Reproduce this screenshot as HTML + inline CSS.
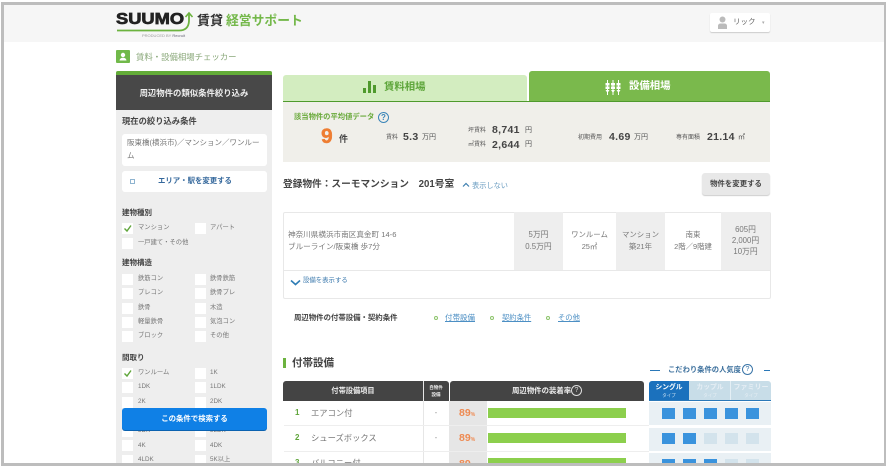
<!DOCTYPE html>
<html lang="ja"><head><meta charset="utf-8"><title>賃料・設備相場チェッカー</title>
<style>
html,body{margin:0;padding:0;background:#fff}
#p{position:relative;width:888px;height:467px;overflow:hidden;background:#fff;font-family:"Liberation Sans","Noto Sans CJK JP",sans-serif;color:#555;filter:blur(.3px)}
#p div,#p span.a{position:absolute;white-space:nowrap}
.t{line-height:12px}
.cb{width:11px;height:11px;background:#fff}
.l{font-size:6.3px;line-height:10px;color:#777}
.h{font-size:7.5px;line-height:12px;font-weight:bold;color:#444}
.c{text-align:center}
.sq{width:13px;height:11px;background:#3a93dd}
.sq.o{background:#d3e3ec}
.row{left:284px;width:365px;height:1px;background:#ececec}
.bar{left:488px;width:138px;height:10px;background:#8ccf4d}
.n{font:bold 10.5px/12px 'Liberation Sans',sans-serif;letter-spacing:.3px;color:#444}
</style></head><body><div id="p">
<div style="left:4px;top:4px;width:880px;height:38px;background:#f6f6f6"></div>

<!-- logo -->
<div style="left:116px;top:11px;font:bold 15.5px/18px 'Liberation Sans',sans-serif;color:#222;-webkit-text-stroke:.7px #222;transform-origin:0 0;transform:scaleX(1.18)">SUUMO</div>
<svg style="position:absolute;left:116px;top:11px" width="80" height="22" viewBox="0 0 80 22"><path d="M1 19.500H63Q72.500 19.500 73 10V3.500" fill="none" stroke="#6cb33f" stroke-width="1.800"/><path d="M69.500 6L73 2L76.500 6" fill="none" stroke="#6cb33f" stroke-width="1.600"/></svg>
<div style="left:142px;top:33px;font-size:4px;line-height:5px;color:#999">PRODUCED BY <span style="color:#667">Recruit</span></div>
<div style="left:197px;top:12px;font-size:13px;line-height:18px;font-weight:bold;color:#333">賃貸</div>
<div style="left:226px;top:12px;font-size:12.800px;line-height:18px;font-weight:bold;color:#74b84a">経営サポート</div>

<!-- user -->
<div style="left:710px;top:13px;width:60px;height:19px;background:#fff;border-radius:2px;box-shadow:0 1px 1px #ccc"></div>
<svg style="position:absolute;left:716px;top:16px" width="12" height="14" viewBox="0 0 12 14"><circle cx="6.500" cy="3.500" r="3" fill="#bbb"/><path d="M2 13V9.500Q2.500 7.500 4.500 7.500H8.500Q10.500 7.500 11 9.500V13Z" fill="#bbb"/></svg>
<div class="t" style="left:733px;top:16px;font-size:7.500px;color:#666">リック</div>
<div class="t" style="left:762px;top:17px;font-size:5px;color:#aaa">▾</div>

<!-- breadcrumb -->
<div style="left:116px;top:50px;width:14px;height:13px;background:#71b94a;border-radius:1px"></div>
<svg style="position:absolute;left:116px;top:50px" width="14" height="13" viewBox="0 0 14 13"><circle cx="7" cy="5" r="2.200" fill="#fff"/><path d="M3.500 10.500Q4 7.800 7 7.800T10.500 10.500Z" fill="#fff"/></svg>
<div class="t" style="left:136px;top:51px;font-size:8.400px;color:#8aa87a">賃料・設備相場チェッカー</div>

<!-- sidebar -->
<div style="left:116px;top:71px;width:156px;height:392px;background:#eee"></div>
<div style="left:116px;top:71px;width:156px;height:5px;background:#63ac38;border-radius:2px 2px 0 0"></div>
<div style="left:116px;top:75px;width:156px;height:35px;background:#484848"></div>
<div class="t c" style="left:116px;top:87px;width:156px;font-size:8.400px;font-weight:bold;color:#eee">周辺物件の類似条件絞り込み</div>
<div class="h" style="left:122px;top:115px;font-size:8.300px">現在の絞り込み条件</div>
<div style="left:122px;top:134px;width:145px;height:32px;background:#fff;border-radius:3px"></div>
<div style="left:127px;top:137px;width:135px;font-size:7.500px;line-height:12.500px;color:#777;white-space:normal;word-break:break-all">阪東橋(横浜市)／マンション／ワンルーム</div>
<div style="left:122px;top:171px;width:145px;height:21px;background:#fff;border-radius:3px"></div>
<div style="left:130px;top:179px;width:3px;height:3px;border:1px solid #8fb4d0"></div>
<div class="t" style="left:158px;top:175px;font-size:7.400px;font-weight:bold;color:#35689c">エリア・駅を変更する</div>

<div class="h" style="left:122px;top:207px">建物種別</div>
<div class="cb" style="left:122px;top:223px"></div><div class="cb" style="left:195px;top:223px"></div><div class="cb" style="left:122px;top:238px"></div>
<div class="l" style="left:138px;top:223px">マンション</div><div class="l" style="left:210px;top:223px">アパート</div><div class="l" style="left:138px;top:238px">一戸建て・その他</div>
<div class="h" style="left:122px;top:257px">建物構造</div>
<div class="cb" style="left:122px;top:274px"></div><div class="cb" style="left:195px;top:274px"></div>
<div class="cb" style="left:122px;top:288px"></div><div class="cb" style="left:195px;top:288px"></div>
<div class="cb" style="left:122px;top:303px"></div><div class="cb" style="left:195px;top:303px"></div>
<div class="cb" style="left:122px;top:317px"></div><div class="cb" style="left:195px;top:317px"></div>
<div class="cb" style="left:122px;top:331px"></div><div class="cb" style="left:195px;top:331px"></div>
<div class="l" style="left:138px;top:274px">鉄筋コン</div><div class="l" style="left:210px;top:274px">鉄骨鉄筋</div>
<div class="l" style="left:138px;top:288px">プレコン</div><div class="l" style="left:210px;top:288px">鉄骨プレ</div>
<div class="l" style="left:138px;top:303px">鉄骨</div><div class="l" style="left:210px;top:303px">木造</div>
<div class="l" style="left:138px;top:317px">軽量鉄骨</div><div class="l" style="left:210px;top:317px">気泡コン</div>
<div class="l" style="left:138px;top:331px">ブロック</div><div class="l" style="left:210px;top:331px">その他</div>
<div class="h" style="left:122px;top:352px">間取り</div>
<div class="cb" style="left:122px;top:368px"></div><div class="cb" style="left:195px;top:368px"></div>
<div class="cb" style="left:122px;top:382px"></div><div class="cb" style="left:195px;top:382px"></div>
<div class="cb" style="left:122px;top:397px"></div><div class="cb" style="left:195px;top:397px"></div>
<div class="cb" style="left:122px;top:426px"></div><div class="cb" style="left:195px;top:426px"></div>
<div class="cb" style="left:122px;top:440px"></div><div class="cb" style="left:195px;top:440px"></div>
<div class="cb" style="left:122px;top:455px"></div><div class="cb" style="left:195px;top:455px"></div>
<div class="l" style="left:138px;top:368px">ワンルーム</div><div class="l" style="left:210px;top:368px">1K</div>
<div class="l" style="left:138px;top:382px">1DK</div><div class="l" style="left:210px;top:382px">1LDK</div>
<div class="l" style="left:138px;top:397px">2K</div><div class="l" style="left:210px;top:397px">2DK</div>
<div class="l" style="left:138px;top:426px">3DK</div><div class="l" style="left:210px;top:426px">3LDK</div>
<div class="l" style="left:138px;top:441px">4K</div><div class="l" style="left:210px;top:441px">4DK</div>
<div class="l" style="left:138px;top:455px">4LDK</div><div class="l" style="left:210px;top:455px">5K以上</div>
<svg style="position:absolute;left:122px;top:223px" width="11" height="11" viewBox="0 0 11 11"><path d="M2.500 5.500L5 8L9 2.500" fill="none" stroke="#5fa53a" stroke-width="1.400"/></svg>
<svg style="position:absolute;left:122px;top:368px" width="11" height="11" viewBox="0 0 11 11"><path d="M2.500 5.500L5 8L9 2.500" fill="none" stroke="#5fa53a" stroke-width="1.400"/></svg>
<div style="left:122px;top:408px;width:145px;height:22px;background:#0f80e6;border-radius:3px;box-shadow:0 1px 0 #0b62b0"></div>
<div class="t c" style="left:122px;top:413px;width:145px;font-size:7.400px;font-weight:bold;color:#fff">この条件で検索する</div>

<!-- tabs -->
<div style="left:283px;top:75px;width:244px;height:26px;background:#d3edc0;border-radius:3px 3px 0 0"></div>
<div style="left:529px;top:71px;width:241px;height:30px;background:#7ab94c;border-radius:3px 3px 0 0"></div>
<div style="left:283px;top:101px;width:487px;height:1px;background:#4f9a2d"></div>
<svg style="position:absolute;left:363px;top:81px" width="13" height="12" viewBox="0 0 13 12"><path d="M0 7H3V12H0ZM5 0H8V12H5ZM10 4H13V12H10Z" fill="#4f9a2d"/></svg>
<div class="t" style="left:384px;top:82px;font-size:10.400px;font-weight:bold;color:#5da53a">賃料相場</div>
<svg style="position:absolute;left:605px;top:80px" width="16" height="15" viewBox="0 0 16 15" fill="#fff"><path d="M2 0h1v15H2zM7.500 0h1v15h-1zM13 0h1v15h-1z"/><path d="M.5 3h4v2.500h-4zM6 3h4v2.500H6zM11.500 3h4v2.500h-4zM.5 6.500h4V9h-4zM6 6.500h4V9H6zM11.500 6.500h4V9h-4zM.5 10h4l-2 3zM6 10h4l-2 3zM11.500 10h4l-2 3z"/></svg>
<div class="t" style="left:629px;top:81px;font-size:10.400px;font-weight:bold;color:#fff">設備相場</div>

<!-- summary -->
<div style="left:283px;top:102px;width:487px;height:60px;background:#f0efea"></div>
<div class="t" style="left:294px;top:111px;font-size:7.300px;color:#6aaa3c;font-weight:bold">該当物件の平均値データ</div>
<div style="left:378px;top:112px;width:9px;height:9px;border:1px solid #3a85b8;border-radius:50%;font-size:8px;line-height:9px;text-align:center;color:#3a85b8;font-weight:bold">?</div>
<div style="left:321px;top:124px;font-size:21px;line-height:26px;font-weight:bold;color:#ee7d32;-webkit-text-stroke:.4px #ee7d32">9</div>
<div class="t" style="left:339px;top:133px;font-size:9px;font-weight:bold;color:#444">件</div>
<div class="t" style="left:386px;top:132px;font-size:6px;color:#555">賃料</div>
<div class="n" style="left:403px;top:131px">5.3</div>
<div class="t" style="left:422px;top:132px;font-size:7px;color:#555">万円</div>
<div class="t" style="left:468px;top:125px;font-size:6px;color:#555">坪賃料</div>
<div class="n" style="left:492px;top:124px">8,741</div>
<div class="t" style="left:525px;top:125px;font-size:7px;color:#555">円</div>
<div class="t" style="left:468px;top:139px;font-size:6px;color:#555">㎡賃料</div>
<div class="n" style="left:492px;top:139px">2,644</div>
<div class="t" style="left:525px;top:139px;font-size:7px;color:#555">円</div>
<div class="t" style="left:578px;top:132px;font-size:6px;color:#555">初期費用</div>
<div class="n" style="left:609px;top:131px">4.69</div>
<div class="t" style="left:634px;top:132px;font-size:7px;color:#555">万円</div>
<div class="t" style="left:676px;top:132px;font-size:6px;color:#555">専有面積</div>
<div class="n" style="left:707px;top:131px">21.14</div>
<div class="t" style="left:738px;top:132px;font-size:7px;color:#555">㎡</div>

<!-- property -->
<div class="t" style="left:283px;top:179px;font-size:9.700px;font-weight:bold;color:#444">登録物件：スーモマンション　201号室</div>
<svg style="position:absolute;left:462px;top:182px" width="8" height="6" viewBox="0 0 8 6"><path d="M1 4.500L4 1.500L7 4.500" fill="none" stroke="#3d7fb0" stroke-width="1.200"/></svg>
<div class="t" style="left:472px;top:180px;font-size:7.200px;color:#6a9cc0">表示しない</div>
<div style="left:702px;top:173px;width:68px;height:22px;background:#e8e8e8;border-radius:3px;box-shadow:0 1px 1px #ccc"></div>
<div class="t c" style="left:702px;top:178px;width:68px;font-size:7.400px;font-weight:bold;color:#444">物件を変更する</div>

<div style="left:283px;top:212px;width:486px;height:85px;border:1px solid #e8e8e8;border-radius:2px;background:#fff;box-sizing:content-box"></div>
<div style="left:514px;top:212px;width:49px;height:58px;background:#eee"></div>
<div style="left:616px;top:212px;width:49px;height:58px;background:#eee"></div>
<div style="left:721px;top:212px;width:49px;height:58px;background:#eee"></div>
<div style="left:284px;top:270px;width:486px;height:1px;background:#e8e8e8"></div>
<div style="left:288px;top:229px;font-size:7.600px;line-height:11.500px;color:#777">神奈川県横浜市南区真金町 14-6<br>ブルーライン/阪東橋 歩7分</div>
<div class="c" style="left:514px;top:229px;width:49px;font-size:7.800px;line-height:11.500px;color:#777">5万円<br>0.5万円</div>
<div class="c" style="left:563px;top:229px;width:53px;font-size:7.400px;line-height:11.500px;color:#777">ワンルーム<br>25㎡</div>
<div class="c" style="left:616px;top:229px;width:49px;font-size:7.400px;line-height:11.500px;color:#777">マンション<br>築21年</div>
<div class="c" style="left:665px;top:229px;width:56px;font-size:7.400px;line-height:11.500px;color:#777">南東<br>2階／9階建</div>
<div class="c" style="left:721px;top:224px;width:49px;font-size:7.800px;line-height:11.200px;color:#777">605円<br>2,000円<br>10万円</div>
<svg style="position:absolute;left:290px;top:279px" width="11" height="7" viewBox="0 0 11 7"><path d="M1 1.500L5.500 5.500L10 1.500" fill="none" stroke="#2f7db5" stroke-width="1.600"/></svg>
<div class="t" style="left:303px;top:275px;font-size:6.400px;color:#3b79ad">設備を表示する</div>

<div class="t" style="left:294px;top:312px;font-size:7.400px;font-weight:bold;color:#444">周辺物件の付帯設備・契約条件</div>
<div style="left:434px;top:316px;width:2px;height:2px;border:1.500px solid #8cc46a;border-radius:50%"></div>
<div style="left:490px;top:316px;width:2px;height:2px;border:1.500px solid #8cc46a;border-radius:50%"></div>
<div style="left:546px;top:316px;width:2px;height:2px;border:1.500px solid #8cc46a;border-radius:50%"></div>
<div class="t" style="left:445px;top:312px;font-size:7.500px;color:#4c8fc4;text-decoration:underline">付帯設備</div>
<div class="t" style="left:502px;top:312px;font-size:7.300px;color:#4c8fc4;text-decoration:underline">契約条件</div>
<div class="t" style="left:558px;top:312px;font-size:7.300px;color:#4c8fc4;text-decoration:underline">その他</div>

<!-- section -->
<div style="left:283px;top:358px;width:3px;height:10px;background:#6cb33f"></div>
<div class="t" style="left:292px;top:357px;font-size:10.500px;font-weight:bold;color:#444">付帯設備</div>

<div style="left:283px;top:381px;width:165px;height:20px;background:#444;border-radius:3px 3px 0 0"></div>
<div style="left:424px;top:381px;width:25px;height:20px;background:#444;border-radius:3px 3px 0 0"></div>
<div style="left:450px;top:381px;width:194px;height:20px;background:#444;border-radius:3px 3px 0 0"></div>
<div style="left:423px;top:381px;width:1px;height:82px;background:#e6e6e6"></div>
<div class="t c" style="left:283px;top:385px;width:140px;font-size:7.200px;font-weight:bold;color:#eee">付帯設備項目</div>
<div class="c" style="left:424px;top:384px;width:24px;font-size:4.500px;line-height:7px;font-weight:bold;color:#eee">自物件<br>設備</div>
<div class="t" style="left:512px;top:385px;font-size:7.400px;font-weight:bold;color:#eee">周辺物件の装着率</div>
<div style="left:571px;top:385px;width:9px;height:9px;border:1px solid #ddd;border-radius:50%;font-size:7px;line-height:9px;text-align:center;color:#ddd">?</div>

<div style="left:449px;top:401px;width:38px;height:62px;background:#e6e6e6"></div>
<div class="row" style="top:425px;left:284px;width:365px;background:#eee"></div>
<div class="row" style="top:451px;left:284px;width:365px;background:#eee"></div>
<div class="t" style="left:295px;top:407px;font-size:8px;font-weight:bold;color:#5fa53a">1</div>
<div class="t" style="left:295px;top:432px;font-size:8px;font-weight:bold;color:#5fa53a">2</div>
<div class="t" style="left:295px;top:457px;font-size:8px;font-weight:bold;color:#5fa53a;height:6px;overflow:hidden">3</div>
<div class="t" style="left:311px;top:407px;font-size:8.300px;color:#777">エアコン付</div>
<div class="t" style="left:311px;top:432px;font-size:8.300px;color:#777">シューズボックス</div>
<div class="t" style="left:311px;top:457px;font-size:8.300px;color:#777;height:6px;overflow:hidden">バルコニー付</div>
<div class="t c" style="left:424px;top:407px;width:24px;font-size:8px;color:#999">-</div>
<div class="t c" style="left:424px;top:432px;width:24px;font-size:8px;color:#999">-</div>
<div class="t" style="left:459px;top:407px;font:bold 10.500px/12px 'Liberation Sans',sans-serif;color:#ee8a52">89<span style="font-size:5px">%</span></div>
<div class="t" style="left:459px;top:432px;font:bold 10.500px/12px 'Liberation Sans',sans-serif;color:#ee8a52">89<span style="font-size:5px">%</span></div>
<div class="t" style="left:459px;top:458px;height:5px;overflow:hidden;font:bold 10.500px/12px 'Liberation Sans',sans-serif;color:#ee8a52">89</div>
<div class="bar" style="top:408px"></div>
<div class="bar" style="top:433px"></div>
<div class="bar" style="top:458px;height:5px"></div>

<!-- popularity -->
<div style="left:650px;top:370px;width:10px;height:1px;background:#2a78b8"></div>
<div style="left:764px;top:370px;width:6px;height:1px;background:#2a78b8"></div>
<div class="t" style="left:668px;top:364px;font-size:7.300px;font-weight:bold;color:#3b6f9c">こだわり条件の人気度</div>
<div style="left:742px;top:364px;width:9px;height:9px;border:1px solid #3a75a8;border-radius:50%;font-size:7px;line-height:9px;text-align:center;color:#3a75a8">?</div>
<div style="left:649px;top:381px;width:122px;height:19px;background:#c8dde8;border-radius:3px 3px 0 0"></div>
<div style="left:649px;top:381px;width:40px;height:19px;background:#1b71bd;border-radius:3px 0 0 0"></div>
<div style="left:730px;top:381px;width:1px;height:19px;background:#e4eff5"></div>
<div style="left:649px;top:400px;width:122px;height:1px;background:#2a78b8"></div>
<div class="c" style="left:649px;top:383px;width:40px;font-size:6.800px;line-height:10px;font-weight:bold;color:#fff">シングル</div>
<div class="c" style="left:649px;top:392px;width:40px;font-size:4.500px;line-height:7px;color:#cfe3f3">タイプ</div>
<div class="c" style="left:690px;top:383px;width:40px;font-size:6.800px;line-height:10px;font-weight:bold;color:#e6eef4">カップル</div>
<div class="c" style="left:690px;top:392px;width:40px;font-size:4.500px;line-height:7px;color:#e6eef4">タイプ</div>
<div class="c" style="left:731px;top:383px;width:40px;font-size:7px;line-height:10px;font-weight:bold;color:#e6eef4">ファミリー</div>
<div class="c" style="left:731px;top:392px;width:40px;font-size:4.500px;line-height:7px;color:#e6eef4">タイプ</div>
<div style="left:649px;top:402px;width:122px;height:23px;background:#e9f0f4"></div>
<div style="left:649px;top:428px;width:122px;height:23px;background:#e9f0f4"></div>
<div style="left:649px;top:453px;width:122px;height:10px;background:#e9f0f4"></div>
<div class="sq" style="left:662px;top:408px"></div><div class="sq" style="left:683px;top:408px"></div><div class="sq" style="left:704px;top:408px"></div><div class="sq" style="left:725px;top:408px"></div><div class="sq" style="left:746px;top:408px"></div>
<div class="sq" style="left:662px;top:433px"></div><div class="sq" style="left:683px;top:433px"></div><div class="sq o" style="left:704px;top:433px"></div><div class="sq o" style="left:725px;top:433px"></div><div class="sq o" style="left:746px;top:433px"></div>
<div class="sq" style="left:662px;top:459px;height:4px"></div><div class="sq" style="left:683px;top:459px;height:4px"></div><div class="sq" style="left:704px;top:459px;height:4px"></div><div class="sq o" style="left:725px;top:459px;height:4px"></div><div class="sq o" style="left:746px;top:459px;height:4px"></div>

<!-- frame -->
<div style="left:1px;top:2px;width:885px;height:3px;background:#bdbdbd"></div>
<div style="left:1px;top:2px;width:3px;height:464px;background:#bdbdbd"></div>
<div style="left:884px;top:2px;width:2px;height:464px;background:#bdbdbd"></div>
<div style="left:1px;top:463px;width:885px;height:3px;background:#bdbdbd"></div>
</div></body></html>
